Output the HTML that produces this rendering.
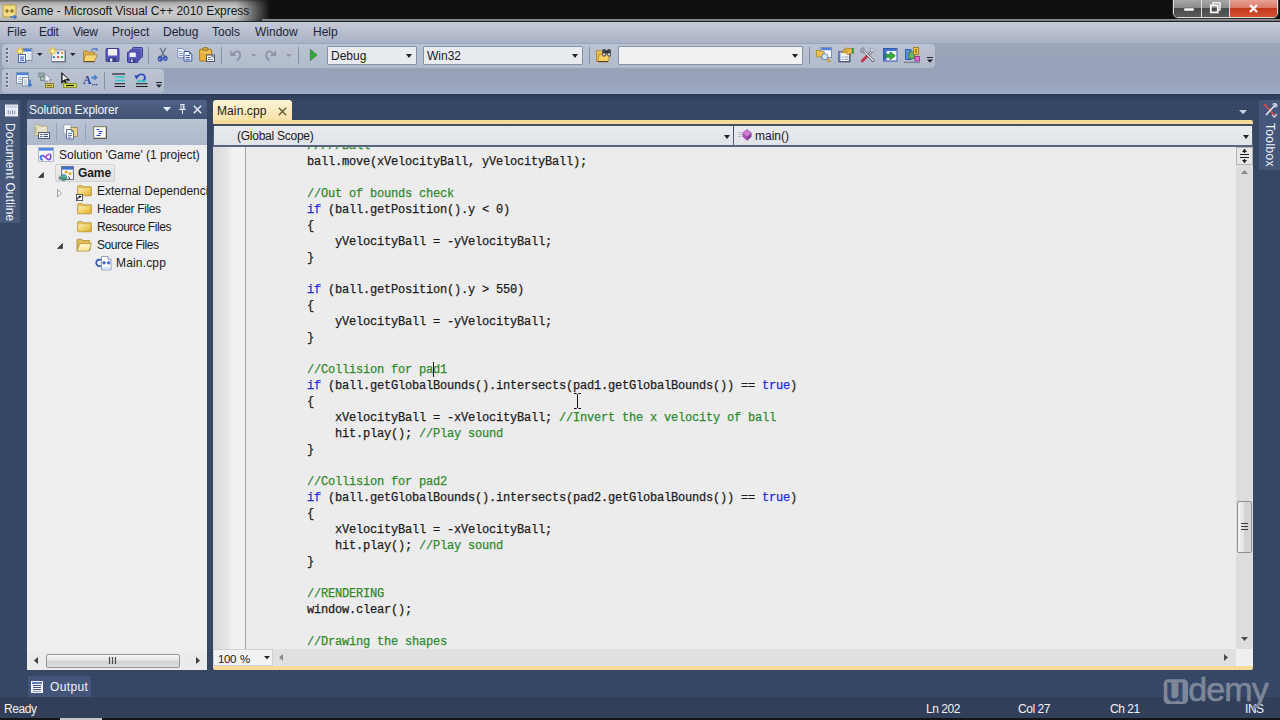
<!DOCTYPE html>
<html>
<head>
<meta charset="utf-8">
<title>Game - Microsoft Visual C++ 2010 Express</title>
<style>
*{box-sizing:border-box;margin:0;padding:0}
html,body{width:1280px;height:720px;overflow:hidden}
body{position:relative;background:#344564;font-family:"Liberation Sans",sans-serif;font-size:12px;color:#1a1a1a}
.abs{position:absolute}
svg{overflow:visible}
/* title bar */
#title{left:0;top:0;width:1280px;height:22px;background:#101010}
#titleglow{left:0;top:0;width:275px;height:21px;background:linear-gradient(90deg,rgba(16,16,16,0) 0,rgba(16,16,16,0) 236px,rgba(16,16,16,.5) 253px,#101010 270px),linear-gradient(#626262 0,#a4a4a4 12%,#c2c2c2 30%,#cbcbcb 60%,#c2c2c2 85%,#adadad 100%)}
#titleclip{left:0;top:0;width:1280px;height:21px;overflow:hidden}
#titletext{left:21px;top:4px;font-size:12px;color:#151515;white-space:nowrap;letter-spacing:-.06px}
#titlehl{left:0;top:19px;width:1280px;height:2px;background:linear-gradient(#9a9a9a,#6c6c6c)}
#titleline{left:0;top:21px;width:1280px;height:1px;background:#20242c}
#wbtn{left:1173px;top:-4px;width:105px;height:22px;border:1px solid #d8d8d8;border-radius:0 0 5px 5px;overflow:hidden;box-shadow:0 0 0 1px #333}
#wbtn div{position:absolute;top:0;height:22px}
.wb{background:linear-gradient(#b2b2b2 0,#8c8c8c 48%,#4a4a4a 52%,#5e5e5e 100%);border-right:1px solid #dcdcdc}
.wbc{background:linear-gradient(#eeb0a4 0,#da7a68 48%,#c23a1c 52%,#d8583a 100%)}
/* menu */
#menu{left:0;top:22px;width:1280px;height:21px;background:linear-gradient(#c5cad6,#a9b2c6)}
#menu span{position:absolute;top:3px;font-size:12px;color:#1c2436}
#menu em{font-style:normal;letter-spacing:-.3px}
/* toolbars */
#tbarea{left:0;top:43px;width:1280px;height:51px;background:linear-gradient(#9aa5ba 0,#97a2b8 65%,#9da9c3 100%)}
.tb{height:24px;background:linear-gradient(#bcc4d3,#b2bbcc);border-radius:4px}
.combo{height:19px;background:#e8ebef;border:1px solid #8591a8;font-size:12px;line-height:17px;padding-left:4px;color:#1b1b1b;border-radius:1px}
.combo:after{content:"";position:absolute;right:4px;top:7px;border:3.5px solid transparent;border-top:4px solid #222;border-bottom:0}
.sep{width:1px;height:17px;background:#8490a6}
/* dotted main bg */
#main{left:0;top:94px;width:1280px;height:604px;background-color:#344564;background-image:radial-gradient(circle at .5px .5px,rgba(120,138,172,.22) .45px,rgba(120,138,172,0) .8px),radial-gradient(circle at 2.5px 2.5px,rgba(120,138,172,.22) .45px,rgba(120,138,172,0) .8px),linear-gradient(rgba(30,44,72,.55) 0,rgba(30,44,72,0) 8px);background-size:4px 4px,4px 4px,100% 100%}
#status{left:0;top:697px;width:1280px;height:21px;background:#323f5b;color:#fff}
#status span{position:absolute;top:5px;color:#f2f2f2;font-size:12px;letter-spacing:-.45px}
#bottomline{left:0;top:718px;width:1280px;height:2px;background:#141414}
/* solution explorer */
#sehead{left:27px;top:100px;width:180px;height:20px;background:linear-gradient(#4f6285,#3f5274);border-radius:3px 3px 0 0}
#sehead span{position:absolute;left:2px;top:3px;font-size:12px;color:#f4f6fa;letter-spacing:-.12px}
#setb{left:27px;top:119px;width:180px;height:26px;background:linear-gradient(#bbc4d4,#adb8cb)}
#setree{left:27px;top:145px;width:180px;height:507px;background:#eeeeee;overflow:hidden}
#setree .it{position:absolute;white-space:nowrap;font-size:12px;color:#1a1a1a;height:18px;line-height:18px}
#sesel{left:28px;top:19px;width:60px;height:18px;border:1px solid #d2d2d2;border-radius:2px;background:linear-gradient(#ececec,#e0e0e0)}
#sescroll{left:27px;top:652px;width:180px;height:18px;background:#ebebeb}
#sethumb{left:19px;top:2px;width:134px;height:14px;border:1px solid #979797;border-radius:2px;background:linear-gradient(#f6f6f6,#e3e3e3 45%,#d2d2d2 55%,#dcdcdc)}
/* side tabs */
#doctab{left:0;top:100px;width:20px;height:123px;background:#47597a;border-radius:0 2px 2px 0}
.vtext{position:absolute;transform-origin:0 0;transform:rotate(90deg);white-space:nowrap;color:#f0f3f8;font-size:12px}
#tooltab{left:1259px;top:100px;width:21px;height:70px;background:#445679}
/* editor */
#tab{left:213px;top:100px;width:79px;height:22px;background:linear-gradient(#fcf4d6,#f6e0a4);border-radius:3px 3px 0 0}
#tab span{position:absolute;left:4px;top:4px;font-size:12px;color:#1a1a1a;letter-spacing:.1px}
#tabline{left:213px;top:120px;width:1040px;height:4px;background:#f6dc98;border-radius:0 2px 0 0}
#nav{left:213px;top:124px;width:1040px;height:23px;background:linear-gradient(#454f62 0,#454f62 2px,#5a6478 21px,#59637a 23px)}
.navc{position:absolute;top:2px;height:19px;background:linear-gradient(#e9ebef,#e0e3e9);font-size:12px;line-height:21px;color:#1a1a1a}
.navc:after{content:"";position:absolute;right:3px;top:9px;border:3.5px solid transparent;border-top:4px solid #222;border-bottom:0}
#ed{left:213px;top:147px;width:1040px;height:502px;background:#ececec;overflow:hidden}
#gut1{left:0;top:0;width:15px;height:502px;background:linear-gradient(90deg,#d9d9d9,#e6e6e6)}
#gut2{left:15px;top:0;width:17px;height:502px;background:linear-gradient(90deg,#e8e8e8,#f1f1f1 4px)}
#gutline{left:32px;top:0;width:1px;height:502px;background:#a5a5a5}
#code{left:94px;top:-9px;font-family:"Liberation Mono",monospace;font-size:12px;letter-spacing:-.2px;line-height:16px;white-space:pre;color:#1c1c1c;-webkit-text-stroke:.25px}
#code i{font-style:normal;color:#2f8a2f}
#code b{font-weight:normal;color:#2a2ad8}
#caret{left:220px;top:215px;width:1px;height:15px;background:#111}
#vs{left:1023px;top:0;width:17px;height:502px;background:#dddddd}
#vthumb{left:1024px;top:354px;width:15px;height:52px;border:1px solid #8e8e8e;border-radius:2px;background:linear-gradient(90deg,#f5f5f5,#e0e0e0 45%,#cfcfcf 55%,#d8d8d8)}
#split{left:1023px;top:0;width:17px;height:18px;background:#e8e8e8;border:1px solid #b4b4b4}
#edbot{left:213px;top:649px;width:1040px;height:17px;background:#e0e0e0}
#zoomc{left:0;top:0;width:60px;height:17px;background:#f2f2f2;border:1px solid #d0d0d0;font-size:11.5px;line-height:18px;padding-left:4px;letter-spacing:-.45px;word-spacing:1.5px}
#corner{left:1023px;top:0;width:17px;height:17px;background:#efefef}
#edline{left:213px;top:666px;width:1040px;height:4px;background:#f6dc98;border-radius:0 0 2px 2px}
#outtab{left:28px;top:676px;width:63px;height:21px;background:#43557a}
#outtab span{position:absolute;left:22px;top:4px;color:#f2f4f8;font-size:12px;letter-spacing:.35px}
#udemy{left:1163px;top:669px;font-size:40px;letter-spacing:-2.5px;color:rgba(200,206,218,.62);white-space:nowrap;line-height:44px}
#ubox{left:1163px;top:678px;width:27px;height:27px;border-radius:5px;background:rgba(200,206,218,.62)}
</style>
</head>
<body>
<!-- TITLE -->
<div id="title" class="abs"></div><div id="titleclip" class="abs"><div id="titleglow" class="abs"></div></div><div id="titlehl" class="abs" style="left:262px;width:1018px"></div><div id="titleline" class="abs"></div><svg class="abs" style="left:2px;top:4px" width="16" height="16" viewBox="0 0 16 16" ><rect x="1" y="1" width="13" height="12" fill="#f2dc86" stroke="#b89a3a"/><path d="M3 7h4M5 5v4M8 7h4M10 5v4" stroke="#7a6420" stroke-width="1.200"/><path d="M8 13h6l-2-2M14 13l-2 2" stroke="#3a78d0" stroke-width="1.400" fill="none"/></svg><div id="titletext" class="abs">Game - Microsoft Visual C++ 2010 Express</div><div id="wbtn" class="abs"><div class="wb" style="left:0;width:28px"></div><div class="wb" style="left:28px;width:28px"></div><div class="wbc" style="left:56px;width:48px"></div></div><svg class="abs" style="left:1184px;top:8px" width="10" height="3" viewBox="0 0 10 3" ><rect x="0" y="0" width="10" height="3" fill="#f6f6f6" stroke="#555" stroke-width=".5"/></svg><svg class="abs" style="left:1210px;top:2px" width="11" height="11" viewBox="0 0 11 11" ><path d="M3 3V.800h7v7H8" fill="none" stroke="#f0f0f0" stroke-width="1.500"/><rect x=".800" y="3.400" width="7" height="7" fill="none" stroke="#f6f6f6" stroke-width="1.800"/></svg><svg class="abs" style="left:1249px;top:4px" width="9" height="9" viewBox="0 0 9 9" ><path d="M1 1l7 7M8 1L1 8" stroke="#f8f8f8" stroke-width="2.400"/></svg>
<!-- MENU -->
<div id="menu" class="abs"><span style="left:7px">File</span><span style="left:39px"><em>Edit</em></span><span style="left:73px"><em>View</em></span><span style="left:112px">Project</span><span style="left:163px">Debug</span><span style="left:212px">Tools</span><span style="left:255px">Window</span><span style="left:313px">Help</span></div>
<!-- TOOLBARS -->
<div id="tbarea" class="abs"></div><div class="abs tb" style="left:2px;top:43.500px;width:933px;height:24.500px"></div><div class="abs tb" style="left:2px;top:69px;width:162px"></div><svg class="abs" style="left:6px;top:48px" width="3" height="15" viewBox="0 0 3 15" ><rect x=".6" y="0.6" width="2" height="2" fill="#e4e9f2"/><rect x="0" y="0" width="2" height="2" fill="#5f6d88"/><rect x=".6" y="4.6" width="2" height="2" fill="#e4e9f2"/><rect x="0" y="4" width="2" height="2" fill="#5f6d88"/><rect x=".6" y="8.6" width="2" height="2" fill="#e4e9f2"/><rect x="0" y="8" width="2" height="2" fill="#5f6d88"/><rect x=".6" y="12.6" width="2" height="2" fill="#e4e9f2"/><rect x="0" y="12" width="2" height="2" fill="#5f6d88"/></svg><svg class="abs" style="left:6px;top:73px" width="3" height="15" viewBox="0 0 3 15" ><rect x=".6" y="0.6" width="2" height="2" fill="#e4e9f2"/><rect x="0" y="0" width="2" height="2" fill="#5f6d88"/><rect x=".6" y="4.6" width="2" height="2" fill="#e4e9f2"/><rect x="0" y="4" width="2" height="2" fill="#5f6d88"/><rect x=".6" y="8.6" width="2" height="2" fill="#e4e9f2"/><rect x="0" y="8" width="2" height="2" fill="#5f6d88"/><rect x=".6" y="12.6" width="2" height="2" fill="#e4e9f2"/><rect x="0" y="12" width="2" height="2" fill="#5f6d88"/></svg><svg class="abs" style="left:16px;top:47px" width="16" height="16" viewBox="0 0 16 16" ><rect x="6.5" y="1.5" width="9.500" height="12" fill="#f4f5f8" stroke="#8392ad"/><rect x="7" y="2" width="8.500" height="2.6" fill="#4a7fd8"/><rect x="11.500" y="6" width="3.500" height="7" fill="#dfe3ea"/><g transform="translate(4 4.2)"><path d="M0-4.2L.9-1.6 3-3 1.6-.9 4.2 0 1.6.9 3 3 .9 1.6 0 4.2-.9 1.6-3 3-1.6.9-4.2 0-1.6-.9-3-3-.9-1.6Z" fill="#fbe070" stroke="#e6b418" stroke-width=".5"/><circle r="1.200" fill="#fff6c8"/></g><rect x="2.5" y="7.5" width="7" height="8" fill="#eef2fc" stroke="#4767a8"/><path d="M4 10h4M4 11.800h4M4 13.600h4" stroke="#3a64c8" stroke-width="1"/></svg><svg class="abs" style="left:37px;top:53px" width="6" height="3" viewBox="0 0 6 3" ><path d="M0 0H5.600L2.800 3Z" fill="#1e2430"/></svg><svg class="abs" style="left:49px;top:47px" width="16" height="16" viewBox="0 0 16 16" ><rect x="2.500" y="3" width="13.500" height="11.500" fill="#f1f2f4" stroke="#8d9ab2"/><path d="M3 14.900h13.400V3.500" fill="none" stroke="#4a5468" stroke-width=".8"/><circle cx="9" cy="5.800" r="1.200" fill="#3d68c8"/><circle cx="12.900" cy="5.800" r="1.200" fill="#f09a28"/><circle cx="4.800" cy="10.100" r="1.200" fill="#2d78d8"/><circle cx="9" cy="10.100" r="1.200" fill="#e0402c"/><circle cx="12.900" cy="10.100" r="1.200" fill="#2f9f3c"/><g transform="translate(3.6 4)"><path d="M0-4.2L.9-1.6 3-3 1.6-.9 4.2 0 1.6.9 3 3 .9 1.6 0 4.2-.9 1.6-3 3-1.6.9-4.2 0-1.6-.9-3-3-.9-1.6Z" fill="#fbe070" stroke="#e6b418" stroke-width=".5"/><circle r="1.200" fill="#fff6c8"/></g></svg><svg class="abs" style="left:70px;top:53px" width="6" height="3" viewBox="0 0 6 3" ><path d="M0 0H5.600L2.800 3Z" fill="#1e2430"/></svg><svg class="abs" style="left:82px;top:47px" width="16" height="16" viewBox="0 0 16 16" ><path d="M1.500 4h4l1 1.200h6v9.300h-11z" fill="#e2b04a" stroke="#a87c22" stroke-width=".8"/><path d="M3.600 7.800h11.600l-2.600 6.700h-11z" fill="#f8d675" stroke="#a8822a" stroke-width=".8"/><path d="M1.800 14.700h10.600" stroke="#4e3c10" stroke-width="1"/><path d="M9.400 3.800c1.200-2.200 3.600-2.600 5-1.200" fill="none" stroke="#5f86cc" stroke-width="1.500"/><path d="M13 .9l3 .5-1 3.200z" fill="#4f76bc"/></svg><svg class="abs" style="left:105px;top:47px" width="16" height="16" viewBox="0 0 16 16" ><rect x="1" y="1.5" width="13" height="13" rx="1" fill="#5b5cc0" stroke="#3b3c96"/><rect x="3" y="2" width="9" height="6.5" fill="#f3eef6"/><rect x="3.5" y="10.5" width="8" height="4.5" fill="#3d3f86"/><rect x="5" y="11.5" width="2.3" height="3" fill="#e8e8f4"/></svg><svg class="abs" style="left:127px;top:47px" width="16" height="16" viewBox="0 0 16 16" ><rect x="5.5" y=".5" width="10" height="10" rx=".8" fill="#6d6fcb" stroke="#3e3f96"/><rect x="3" y="2.8" width="10" height="10" rx=".8" fill="#6567c6" stroke="#3e3f96"/><rect x=".5" y="5" width="10.5" height="10.5" rx=".8" fill="#5b5cc0" stroke="#3b3c96"/><rect x="2.6" y="5.6" width="6.2" height="4.4" fill="#efeaf6"/><rect x="3" y="12" width="5.6" height="3.2" fill="#3d3f86"/><rect x="4" y="12.6" width="1.6" height="2.4" fill="#e4e4f2"/></svg><div class="abs sep" style="left:148px;top:47px"></div><svg class="abs" style="left:157px;top:47px" width="12" height="16" viewBox="0 0 12 16" ><path d="M3.100 .9L7.600 9.600M8.700 .9L4.200 9.600" stroke="#727c90" stroke-width="1.600" fill="none"/><ellipse cx="3.200" cy="11.700" rx="2.200" ry="2.700" fill="#3a58b8" stroke="#2c469c" stroke-width=".6"/><ellipse cx="8.400" cy="11.300" rx="2" ry="2.400" fill="#3a58b8" stroke="#2c469c" stroke-width=".6"/><circle cx="2.800" cy="12.200" r=".7" fill="#a8bcf0"/><circle cx="8.800" cy="11.600" r=".7" fill="#a8bcf0"/></svg><svg class="abs" style="left:177px;top:47px" width="16" height="16" viewBox="0 0 16 16" ><path d="M.8 1.500h4.600l2 2v7.200H.8z" fill="#f4f6fc" stroke="#7088c0" stroke-width=".9"/><path d="M2 4.500h3M2 6.500h4M2 8.500h4" stroke="#8a9cc8"/><path d="M7 4.500h5l2.800 2.800v6.700H7z" fill="#f6f8fe" stroke="#3f5aa0" stroke-width="1"/><path d="M8.500 8.500h4.500M8.500 10.500h4.500M8.500 12.300h4.500" stroke="#4a66b0"/><path d="M12 4.500v2.800h2.800z" fill="#3f5aa0"/></svg><svg class="abs" style="left:199px;top:47px" width="16" height="16" viewBox="0 0 16 16" ><rect x=".6" y="2.200" width="12" height="11.800" rx="1" fill="#e6b23c" stroke="#a67c1e"/><path d="M1.600 3.200h10v3h-10z" fill="#f0c85a" opacity=".7"/><rect x="4" y=".6" width="5" height="3" rx="1.200" fill="#d4a840" stroke="#86681c" stroke-width=".8"/><rect x="7.500" y="8" width="8" height="6.500" fill="#f7f8fb" stroke="#4c5262"/><path d="M9 10.500h3M9 12.500h5" stroke="#7c8498"/><path d="M13 8v2h2.500" fill="none" stroke="#4c5262" stroke-width=".8"/></svg><div class="abs sep" style="left:221px;top:47px"></div><svg class="abs" style="left:230px;top:48px" width="13" height="15" viewBox="0 0 13 15" ><path d="M3.600 6.400C5 2.600 9.600 2.200 10.200 6.600c.3 2.400-1.200 4.400-3.200 6.200" fill="none" stroke="#8d95aa" stroke-width="1.900"/><path d="M.2 2.300V8H6.200z" fill="#8d95aa"/></svg><svg class="abs" style="left:251px;top:54px" width="6" height="3" viewBox="0 0 6 3" ><path d="M0 0H5.600L2.800 3Z" fill="#8d96aa"/></svg><svg class="abs" style="left:264px;top:48px" width="13" height="15" viewBox="0 0 13 15" ><g transform="translate(12.400 0) scale(-1 1)"><path d="M3.600 6.400C5 2.600 9.600 2.200 10.200 6.600c.3 2.400-1.200 4.400-3.200 6.200" fill="none" stroke="#8d95aa" stroke-width="1.900"/><path d="M.2 2.300V8H6.200z" fill="#8d95aa"/></g></svg><svg class="abs" style="left:286px;top:54px" width="6" height="3" viewBox="0 0 6 3" ><path d="M0 0H5.600L2.800 3Z" fill="#8d96aa"/></svg><div class="abs sep" style="left:298px;top:47px"></div><svg class="abs" style="left:310px;top:49px" width="8" height="12" viewBox="0 0 8 12" ><path d="M.3 .2L7 6 .3 11.8z" fill="#35a83a" stroke="#1f7d26" stroke-width=".6"/></svg><div class="abs combo" style="left:327px;top:46px;width:90px;padding-left:3px;line-height:18px">Debug</div><div class="abs combo" style="left:423px;top:46px;width:160px;padding-left:3px;line-height:18px">Win32</div><div class="abs sep" style="left:589px;top:47px"></div><svg class="abs" style="left:596px;top:47px" width="16" height="16" viewBox="0 0 16 16" ><path d="M.5 3.500h4.500l1 1.300h3v9.700h-8.500z" fill="#ecc257" stroke="#a5822e" stroke-width=".8"/><path d="M3 7.300h11.300l-2 7.200h-10.800z" fill="#f6cf62" stroke="#a98226" stroke-width=".8"/><path d="M2 14.600h10" stroke="#5a4410" stroke-width="1.200"/><rect x="6.300" y="2" width="3.600" height="7.600" rx="1.600" fill="#3c4149"/><rect x="11.300" y="2" width="3.600" height="7.600" rx="1.600" fill="#3c4149"/><rect x="9.300" y="3.400" width="2.600" height="3" fill="#2a2e35"/><circle cx="8.100" cy="7.400" r="1.100" fill="#dfe6ee"/><circle cx="13.100" cy="7.400" r="1.100" fill="#dfe6ee"/></svg><div class="abs combo" style="left:618px;top:46px;width:185px;background:#f0f1f3"></div><div class="abs sep" style="left:809px;top:47px"></div><svg class="abs" style="left:816px;top:47px" width="16" height="16" viewBox="0 0 16 16" ><rect x="4.800" y=".5" width="10.700" height="10" fill="#f2f4f8" stroke="#7d8eb0"/><rect x="5.300" y="1" width="9.700" height="2.200" fill="#4d82dc"/><path d="M.4 3.400h3.600l.9 1h3.300v5.400H.4z" fill="#e8c04e" stroke="#a8852a" stroke-width=".8"/><circle cx="8.800" cy="9.800" r="3" fill="#d6e8f6" stroke="#7c93b4" stroke-width="1.100"/><path d="M11 12l3.200 3.200" stroke="#c69a3a" stroke-width="2"/></svg><svg class="abs" style="left:838px;top:47px" width="16" height="16" viewBox="0 0 16 16" ><rect x=".6" y="4.500" width="11" height="10" fill="#f7f8fa" stroke="#5b6b8c"/><path d="M1.100 14.900h11V5" fill="none" stroke="#3c4660" stroke-width=".8"/><rect x="1" y="5" width="1.400" height="9" fill="#5485d6"/><path d="M3.500 10h2M6.500 10h4M3.500 12.300h2M6.500 12.300h4" stroke="#8c95a8"/><path d="M3.200 5.600l4.300-4.400 6.500.4v4.600l-4.600 1.400-2-1.800z" fill="#efc04a" stroke="#a07c20" stroke-width=".8"/><path d="M5 5l3-3M6.500 5.500l3-3M8 6l3-3" stroke="#8a6c1c" stroke-width=".5"/><rect x="14" y="1" width="1.900" height="5.600" fill="#3a9a48"/></svg><svg class="abs" style="left:860px;top:47px" width="16" height="16" viewBox="0 0 16 16" ><path d="M7.600 8.600L12.400 3.600" stroke="#4a4f5a" stroke-width="2.400"/><path d="M7.600 8.600L12.400 3.600" stroke="#e8ebf0" stroke-width="1.300"/><path d="M2.200 14L7.800 8.400" stroke="#c43246" stroke-width="2.700" stroke-linecap="round"/><path d="M10 1.600l2.600-.6 3 3.400-1.500 1.100-1.500-1.600-1.700.7z" fill="#d9dde6" stroke="#7d8598" stroke-width=".6"/><path d="M4 4L13.200 13.800" stroke="#3f444e" stroke-width="2.500" stroke-linecap="round"/><path d="M4 4L13.200 13.800" stroke="#eef1f5" stroke-width="1.300" stroke-linecap="round"/><path d="M4.600 1.600A2.300 2.300 0 1 0 4.800 5" fill="none" stroke="#8a92a4" stroke-width="1.500"/></svg><svg class="abs" style="left:882px;top:47px" width="16" height="16" viewBox="0 0 16 16" ><rect x="1.500" y="1.500" width="13.500" height="12.500" fill="#f1f3f7" stroke="#3457a8" stroke-width="1"/><rect x="2" y="2" width="12.500" height="2" fill="#3f77d0"/><rect x="2" y="4" width="2.600" height="9.500" fill="#3f6fc8"/><path d="M3.400 7.400h4.800V4.900l5 3.900-5 3.900V10.200H3.400z" fill="#34b336" stroke="#14701c" stroke-width=".8"/></svg><svg class="abs" style="left:904px;top:47px" width="16" height="16" viewBox="0 0 16 16" ><rect x="1.5" y="2.5" width="5.5" height="10" fill="#5b8fd8" stroke="#2c5fb0"/><rect x="5" y="5" width="5.5" height="6.5" fill="#6fb36a" stroke="#3d7f3d"/><rect x="9.5" y=".5" width="5" height="7" fill="#f2cc4a" stroke="#9c7d1e"/><path d="M12 2v4" stroke="#6b5510" stroke-width="1.2"/><rect x="11" y="9.5" width="4.500" height="4.500" fill="#e86ad8" stroke="#a23a98"/><path d="M0 15.4h16" stroke="#7b8496" stroke-width="1.4"/></svg><svg class="abs" style="left:927px;top:57px" width="6" height="7" viewBox="0 0 6 7" ><path d="M0 .5h6" stroke="#1e2430" stroke-width="1"/><path d="M0 2.500H6L3 5.800Z" fill="#1e2430"/></svg><svg class="abs" style="left:16px;top:72px" width="16" height="16" viewBox="0 0 16 16" ><rect x=".5" y=".5" width="12" height="11" fill="#f3f5f9" stroke="#8292b2"/><rect x="1" y="1" width="11" height="2.2" fill="#4f84dc"/><path d="M2.500 5.500h3M2.500 7.500h3M2.500 9.500h3" stroke="#9aa4b8"/><rect x="6.5" y="5.5" width="6" height="8.5" fill="#fafbfd" stroke="#7888a6"/><path d="M8 8h3.200M8 10h3.200M8 12h3.200" stroke="#a9b2c4"/><path d="M14 7.500v6" stroke="#3f7cd4" stroke-width="1.6"/><path d="M11.400 12l2.600 3.600 2.600-3.600z" fill="#3f7cd4"/></svg><svg class="abs" style="left:38px;top:72px" width="16" height="16" viewBox="0 0 16 16" ><rect x=".8" y="1" width="5" height="4" fill="#9fb0a8" stroke="#6e7f86" stroke-width=".8"/><rect x="2.400" y="4.400" width="5" height="4" fill="#aab9b4" stroke="#6e7f86" stroke-width=".8"/><path d="M7 1.500v9l2.200-2 1.600 3.400 1.600-.8-1.600-3.200h3z" fill="#f4f5f8" stroke="#7e889c" stroke-width=".8"/><rect x="7.500" y="11.500" width="8" height="4" fill="#d8c858" stroke="#8c8030"/><path d="M9 13.500h5" stroke="#6e6420" stroke-width="1"/></svg><svg class="abs" style="left:61px;top:72px" width="16" height="16" viewBox="0 0 16 16" ><path d="M.6 .4v11l2.600-2.400 2 4.200 2-.900-2-4h3.600z" fill="#111" stroke="#000" stroke-width=".5"/><path d="M1.600 2.600v6.400l1.900-1.700.6 0 1.900 3.900.5-.25-2-4.100h2.400z" fill="#fff"/><rect x="2.500" y="11.500" width="13" height="4" fill="#d4dc58" stroke="#8c9428"/><path d="M5 13.500h8" stroke="#1c1c10" stroke-width="1.200"/></svg><svg class="abs" style="left:83px;top:72px" width="16" height="16" viewBox="0 0 16 16" ><text x="0" y="12" font-family="Liberation Serif,serif" font-weight="bold" font-size="11.500" fill="#2a3f9c">A</text><path d="M8.400 5.600h3.600" stroke="#3f7cd4" stroke-width="1.800"/><path d="M11.200 2.600l3.600 3-3.600 3z" fill="#3f7cd4"/><path d="M9 12.600h1.200M11 12.600h1.200M13 12.600h1.200" stroke="#2a3f9c" stroke-width="1.200"/></svg><div class="abs sep" style="left:104px;top:72px"></div><svg class="abs" style="left:111px;top:72px" width="16" height="16" viewBox="0 0 16 16" ><path d="M1 2h13" stroke="#16181c" stroke-width="1.100"/><path d="M4 5h10M4 8.500h10" stroke="#35c6cc" stroke-width="1.700"/><path d="M3.500 11.800h10.500M3.500 14.500h10.500" stroke="#16181c" stroke-width="1.100"/></svg><svg class="abs" style="left:133px;top:72px" width="16" height="16" viewBox="0 0 16 16" ><path d="M4.500 4.800c1.400-3.400 6.400-3.400 7.400.2.400 1.600-.6 3.200-2.300 3.900" fill="none" stroke="#2c49b8" stroke-width="1.700"/><path d="M1.200 3.200l5 .2-2.600 4.200z" fill="#2c49b8"/><path d="M4 9.200h9" stroke="#35c6cc" stroke-width="1.700"/><path d="M3 11.800h11.500M3 14.500h11.500" stroke="#16181c" stroke-width="1.100"/></svg><svg class="abs" style="left:156px;top:82px" width="6" height="7" viewBox="0 0 6 7" ><path d="M0 .5h6" stroke="#1e2430" stroke-width="1"/><path d="M0 2.500H6L3 5.800Z" fill="#1e2430"/></svg>
<!-- MAIN -->
<div id="main" class="abs"></div>
<div id="doctab" class="abs"><svg class="abs" style="left:5px;top:4px" width="13" height="13" viewBox="0 0 12 11" ><rect x=".5" y=".5" width="11" height="10" fill="#e8ecf4" stroke="#f4f6fa" stroke-width="1"/><rect x="1" y="1" width="10" height="2" fill="#c6d0e4"/><path d="M3 5v4M5 6v3M7 5v4M9 6v3" stroke="#8797b8" stroke-width="1"/></svg><div class="vtext" style="left:17px;top:23px;letter-spacing:.15px">Document Outline</div></div><div id="tooltab" class="abs"><svg class="abs" style="left:4px;top:3px" width="14" height="15" viewBox="0 0 14 15" ><path d="M1 1l11 12" stroke="#e04848" stroke-width="1.600"/><path d="M13 1L3 12" stroke="#e6eaf2" stroke-width="1.600"/><path d="M9.500 1.500c1.500-1.500 4-1 4.500 1l-2 2" fill="none" stroke="#c8cfdc" stroke-width="1.300"/><path d="M9 12l2.500 2 2.500-3" fill="none" stroke="#c8cfdc" stroke-width="1.400"/></svg><div class="vtext" style="left:18px;top:22.500px;letter-spacing:.35px">Toolbox</div></div><div id="outtab" class="abs"><svg class="abs" style="left:3px;top:5px" width="12" height="12" viewBox="0 0 12 12" ><g shape-rendering="crispEdges"><rect x="0" y="0" width="12" height="12" fill="#f4f6fa"/><rect x="1" y="1" width="10" height="2" fill="#5f7cc0"/><rect x="2" y="4" width="8" height="1" fill="#42527a"/><rect x="2" y="6" width="8" height="1" fill="#42527a"/><rect x="2" y="8" width="8" height="1" fill="#42527a"/><rect x="2" y="10" width="8" height="1" fill="#8c98b4"/></g></svg><span>Output</span></div>
<!-- SOLUTION EXPLORER -->
<div id="sehead" class="abs"><span>Solution Explorer</span><svg class="abs" style="left:136px;top:7px" width="8" height="5" viewBox="0 0 8 5" ><path d="M0 0H8L4 4.500Z" fill="#e8ecf4"/></svg><svg class="abs" style="left:152px;top:4px" width="7" height="10" viewBox="0 0 7 10" ><path d="M1.500 .5h4M2 .5v5M5 .5v5M4.200 .5v5M.2 5.500h6.600M3.500 5.500v4.300" stroke="#e8ecf4" stroke-width="1" fill="none"/></svg><svg class="abs" style="left:166px;top:5px" width="9" height="9" viewBox="0 0 9 9" ><path d="M.8 .8l7.400 7.400M8.200 .8L.8 8.200" stroke="#e8ecf4" stroke-width="1.500"/></svg></div><div id="setb" class="abs"><svg class="abs" style="left:7px;top:5px" width="16" height="16" viewBox="0 0 16 16" ><path d="M.5 1.500c0-.6.400-1 1-1h4l1 1.500h6c.6 0 1 .4 1 1v8.500H.5z" fill="#dcd8b6" stroke="#a9a484" stroke-width=".8"/><path d="M3.500 4h9M3.500 6h9M3.500 8h9" stroke="#f1eed8" stroke-width="1"/><path d="M1.600 4h1M1.600 6h1M1.600 8h1" stroke="#7f7a54" stroke-width="1"/><rect x="4.500" y="8.500" width="11" height="6" fill="#f4f6fa" stroke="#4e5a74"/><path d="M6.200 10.500h2M9.500 10.500h4.500M6.200 12.500h2M9.500 12.500h4.500" stroke="#3c4a70"/></svg><div class="abs sep" style="left:29px;top:4px;background:#97a2b8"></div><svg class="abs" style="left:36px;top:5px" width="16" height="16" viewBox="0 0 16 16" ><path d="M.8 .8h7v9h-7z" fill="#f6f7f9" stroke="#7a8498" stroke-width=".9" stroke-dasharray="1.200 1"/><path d="M8 3.500h6.500v9H10" fill="#e8d292" stroke="#a08c4a" stroke-width=".9"/><path d="M3.500 5.500h5l2 2v7.500h-7z" fill="#f8f9fc" stroke="#5f6f94"/><path d="M5 9.500h4M5 11.500h4M5 13.300h3" stroke="#5a78c4"/><path d="M8.500 5.500v2h2" fill="#3a66c8" stroke="#3a66c8" stroke-width=".6"/></svg><div class="abs sep" style="left:58px;top:4px;background:#97a2b8"></div><svg class="abs" style="left:66px;top:7px" width="14" height="13" viewBox="0 0 14 13" ><rect x=".6" y=".6" width="12.800" height="11.800" fill="#fbfbf6" stroke="#8a8c6c" stroke-width="1.200"/><path d="M1 12.400h12.400V1" fill="none" stroke="#55563c" stroke-width="1"/><path d="M3.500 3.500h3M5.500 5.500h4M5.500 7.500h3M3.500 9.500h4" stroke="#2d43b8" stroke-width="1.100"/></svg></div><div id="setree" class="abs"><div id="sesel" class="abs"></div><svg class="abs" style="left:11px;top:2px" width="16" height="15" viewBox="0 0 16 15" ><rect x=".6" y=".6" width="14.800" height="13.800" fill="#f6f7fa" stroke="#a4adc0" stroke-width=".9"/><rect x="1" y="1" width="14" height="2.600" fill="#4f84dc"/><path d="M4.600 12.600c-2.800 0-2.800-4 0-4 2.400 0 3.600 4 6.200 4 2.600 0 2.600-5.200.4-5.600" fill="none" stroke="#7a4bd0" stroke-width="1.600"/><path d="M4.600 12.600c-2.800 0-2.800-4 0-4" fill="none" stroke="#3f8ae0" stroke-width="1.600"/><path d="M7.600 10c1-1.400 2-2.600 3.600-3" fill="none" stroke="#c04fc0" stroke-width="1.500"/></svg><div class="it" style="left:32px;top:1px;letter-spacing:-.02px">Solution 'Game' (1 project)</div><svg class="abs" style="left:11px;top:27px" width="6" height="6" viewBox="0 0 6 6" ><path d="M5.500 .5v5H.5z" fill="#3a3a3a" stroke="#262626" stroke-width=".6"/></svg><svg class="abs" style="left:32px;top:21px" width="15" height="15" viewBox="0 0 15 15" ><rect x="2.600" y=".6" width="11.800" height="12.800" fill="#f4f5f8" stroke="#56627e" stroke-width=".9"/><rect x="3" y="1" width="11" height="2.600" fill="#3f6fd0"/><path d="M7.200 4.600v3.200M5.600 6.200h3.200M11 6v3.200M9.400 7.600h3.200" stroke="#e2a412" stroke-width="1.300"/><circle cx="4.600" cy="11.600" r="3" fill="#3f9c6c" stroke="#2a6a8c" stroke-width=".7"/><path d="M2.400 10.600c1.400-.8 3-.8 4.400 0" stroke="#8fd0e8" stroke-width=".8" fill="none"/><path d="M9 10.500l2 1.600-2 1.600M1 10.500l-1 1.600 1 1.600" fill="none" stroke="#333a48" stroke-width=".9"/></svg><div class="it" style="left:51px;top:19px;font-weight:bold;letter-spacing:-.1px">Game</div><svg class="abs" style="left:30px;top:44px" width="5" height="9" viewBox="0 0 5 9" ><path d="M.6 .6l4 3.600-4 3.600z" fill="#fcfcfc" stroke="#9a9a9a" stroke-width="1"/></svg><svg class="abs" style="left:50px;top:40px" width="15" height="11.5" viewBox="0 0 16 14" preserveAspectRatio="none"><defs><linearGradient id="fg" x1="0" y1="0" x2="1" y2="1"><stop offset="0" stop-color="#fdf0b8"/><stop offset=".55" stop-color="#f0cf62"/><stop offset="1" stop-color="#d9a935"/></linearGradient></defs><path d="M.6 1.500c0-.5.400-.9.900-.9h4.200l1 1.400h8c.4 0 .7.300.7.700v9.800c0 .4-.3.700-.7.700H1.300c-.4 0-.7-.3-.7-.7z" fill="#e8c65a" stroke="#b3923a" stroke-width=".8"/><rect x="1" y="3.400" width="14" height="9.400" rx=".5" fill="url(#fg)" stroke="#c09a3a" stroke-width=".6"/></svg><svg class="abs" style="left:49px;top:49px" width="7" height="7" viewBox="0 0 7 7" ><rect x=".4" y=".4" width="6.200" height="6.200" fill="#fdfdfd" stroke="#3a3e48" stroke-width=".8"/><path d="M1.600 5.600c0-2 1-3 2.800-3" fill="none" stroke="#20242c" stroke-width="1.100"/><path d="M3.400 1.200l2.400 1.400-2.400 1.600z" fill="#20242c"/></svg><div class="it" style="left:70px;top:37px">External Dependencies</div><svg class="abs" style="left:50px;top:58px" width="15" height="11.5" viewBox="0 0 16 14" preserveAspectRatio="none"><defs><linearGradient id="fg2" x1="0" y1="0" x2="1" y2="1"><stop offset="0" stop-color="#fdf0b8"/><stop offset=".55" stop-color="#f0cf62"/><stop offset="1" stop-color="#d9a935"/></linearGradient></defs><path d="M.6 1.500c0-.5.400-.9.900-.9h4.200l1 1.400h8c.4 0 .7.300.7.700v9.800c0 .4-.3.700-.7.700H1.300c-.4 0-.7-.3-.7-.7z" fill="#e8c65a" stroke="#b3923a" stroke-width=".8"/><rect x="1" y="3.400" width="14" height="9.400" rx=".5" fill="url(#fg2)" stroke="#c09a3a" stroke-width=".6"/></svg><div class="it" style="left:70px;top:55px;letter-spacing:-.36px">Header Files</div><svg class="abs" style="left:50px;top:76px" width="15" height="11.5" viewBox="0 0 16 14" preserveAspectRatio="none"><defs><linearGradient id="fg3" x1="0" y1="0" x2="1" y2="1"><stop offset="0" stop-color="#fdf0b8"/><stop offset=".55" stop-color="#f0cf62"/><stop offset="1" stop-color="#d9a935"/></linearGradient></defs><path d="M.6 1.500c0-.5.400-.9.900-.9h4.200l1 1.400h8c.4 0 .7.300.7.700v9.800c0 .4-.3.700-.7.700H1.300c-.4 0-.7-.3-.7-.7z" fill="#e8c65a" stroke="#b3923a" stroke-width=".8"/><rect x="1" y="3.400" width="14" height="9.400" rx=".5" fill="url(#fg3)" stroke="#c09a3a" stroke-width=".6"/></svg><div class="it" style="left:70px;top:73px;letter-spacing:-.43px">Resource Files</div><svg class="abs" style="left:30px;top:98px" width="6" height="6" viewBox="0 0 6 6" ><path d="M5.500 .5v5H.5z" fill="#3a3a3a" stroke="#262626" stroke-width=".6"/></svg><svg class="abs" style="left:49px;top:93px" width="16" height="14" viewBox="0 0 16 14" ><path d="M1 2c0-.4.300-.7.700-.7h4l1 1.300h6.600c.4 0 .7.300.7.700v9.300H1z" fill="#e2bd52" stroke="#a88832" stroke-width=".8"/><path d="M3.800 5.600h11.800l-2.800 7.400H.9z" fill="#fbe9a4" stroke="#b4943c" stroke-width=".8"/><path d="M4.600 6.600h9.600l-1 2.600H3.600z" fill="#fff6d0" opacity=".8"/></svg><div class="it" style="left:70px;top:91px;letter-spacing:-.42px">Source Files</div><svg class="abs" style="left:69px;top:110px" width="16" height="16" viewBox="0 0 16 16" ><path d="M5.500 1.500h6.500l3 3v10.500h-9.500z" fill="#fbfcfe" stroke="#8698bc" stroke-width=".9"/><path d="M12 1.500v3h3" fill="#dfe6f4" stroke="#8698bc" stroke-width=".8"/><path d="M6 12h8v2.600H6z" fill="#d4e0f4"/><path d="M5.200 4.800c-3.600-1-5 1.200-5 3s1.400 4 5 3" fill="none" stroke="#2f55b8" stroke-width="1.700"/><path d="M6.200 7.800h3.600M8 6v3.600M10.800 7.800h3.600M12.600 6v3.600" stroke="#2f55b8" stroke-width="1.300"/></svg><div class="it" style="left:89px;top:109px;letter-spacing:.17px">Main.cpp</div></div><div id="sescroll" class="abs"><svg class="abs" style="left:7px;top:5px" width="4" height="7" viewBox="0 0 4 7" ><path d="M4 0v7L0 3.500z" fill="#3c3c3c"/></svg><svg class="abs" style="left:169px;top:5px" width="4" height="7" viewBox="0 0 4 7" ><path d="M0 0v7L4 3.500z" fill="#3c3c3c"/></svg><div id="sethumb" class="abs"></div><svg class="abs" style="left:82px;top:5px" width="7" height="7" viewBox="0 0 7 7" ><path d="M.5 0v7M3.500 0v7M6.500 0v7" stroke="#4a4a4a" stroke-width="1.200"/></svg></div>
<!-- EDITOR -->
<div id="tab" class="abs"><span>Main.cpp</span><svg class="abs" style="left:65px;top:7px" width="9" height="9" viewBox="0 0 9 9" ><path d="M.8 .8l7.400 7.400M8.200 .8L.8 8.200" stroke="#6d5f3d" stroke-width="1.500"/></svg></div><div id="tabline" class="abs"></div><svg class="abs" style="left:1239px;top:110px" width="8" height="5" viewBox="0 0 8 5" ><path d="M0 0H8L4 4.200Z" fill="#c9d2e2"/></svg><div id="nav" class="abs"><div class="navc" style="left:1px;width:519px;padding-left:23px;letter-spacing:-.25px">(Global Scope)</div><div class="navc" style="left:521px;width:518px;padding-left:21px">main()<svg class="abs" style="left:4px;top:3px" width="14" height="13" viewBox="0 0 14 13" ><path d="M0 3.500h3.500M.8 5.500h3M0 7.500h3.500" stroke="#a9adb6" stroke-width=".8"/><path d="M9 .5l4.500 3.600-4.500 4-4.500-4z" fill="#d27ad8" stroke="#9040a0" stroke-width=".6"/><path d="M4.500 4.100l4.500 4v3.600l-4.500-4z" fill="#a84cb4"/><path d="M13.500 4.100l-4.500 4v3.600l4.500-4z" fill="#8a3896"/></svg></div></div><div id="ed" class="abs"><div id="gut1" class="abs"></div><div id="gut2" class="abs"></div><div id="gutline" class="abs"></div><div id="code" class="abs"><i>/////Ball</i>
ball.move(xVelocityBall, yVelocityBall);

<i>//Out of bounds check</i>
<b>if</b> (ball.getPosition().y &lt; 0)
{
    yVelocityBall = -yVelocityBall;
}

<b>if</b> (ball.getPosition().y &gt; 550)
{
    yVelocityBall = -yVelocityBall;
}

<i>//Collision for pad1</i>
<b>if</b> (ball.getGlobalBounds().intersects(pad1.getGlobalBounds()) == <b>true</b>)
{
    xVelocityBall = -xVelocityBall; <i>//Invert the x velocity of ball</i>
    hit.play(); <i>//Play sound</i>
}

<i>//Collision for pad2</i>
<b>if</b> (ball.getGlobalBounds().intersects(pad2.getGlobalBounds()) == <b>true</b>)
{
    xVelocityBall = -xVelocityBall;
    hit.play(); <i>//Play sound</i>
}

<i>//RENDERING</i>
window.clear();

<i>//Drawing the shapes</i></div><div id="caret" class="abs"></div><svg class="abs" style="left:361px;top:246px" width="7" height="16" viewBox="0 0 7 16" ><path d="M0 .5h2.700M4.300 .5H7M0 15.500h2.700M4.300 15.500H7M3.500 1v14" stroke="#111" stroke-width="1" fill="none"/></svg><div id="vs" class="abs"></div><div id="split" class="abs"></div><svg class="abs" style="left:1027px;top:2px" width="9" height="14" viewBox="0 0 9 14" ><path d="M0 5.500h9M0 8.500h9M4.500 0v4M4.500 10v4" stroke="#1c1c1c" stroke-width="1.200"/><path d="M2 3l2.500-3L7 3zM2 11l2.500 3L7 11z" fill="#1c1c1c"/></svg><svg class="abs" style="left:1028px;top:23px" width="7" height="4" viewBox="0 0 7 4" ><path d="M0 4L3.500 0 7 4z" fill="#8a8a8a"/></svg><svg class="abs" style="left:1028px;top:490px" width="7" height="4" viewBox="0 0 7 4" ><path d="M0 0L3.500 4 7 0z" fill="#4a4a4a"/></svg><div id="vthumb" class="abs"></div><svg class="abs" style="left:1028px;top:376px" width="7" height="7" viewBox="0 0 7 7" ><path d="M0 .5h7M0 3.500h7M0 6.500h7" stroke="#3c3c3c" stroke-width="1.200"/></svg></div><div id="edbot" class="abs"><div id="zoomc" class="abs">100 %</div><svg class="abs" style="left:51px;top:7px" width="6" height="4" viewBox="0 0 6 4" ><path d="M0 0H6L3 3.200Z" fill="#222"/></svg><svg class="abs" style="left:66px;top:5px" width="4" height="7" viewBox="0 0 4 7" ><path d="M4 0v7L0 3.500z" fill="#8a8a8a"/></svg><svg class="abs" style="left:1011px;top:5px" width="4" height="7" viewBox="0 0 4 7" ><path d="M0 0v7L4 3.500z" fill="#4a4a4a"/></svg><div id="corner" class="abs"></div></div><div id="edline" class="abs"></div>
<!-- STATUS -->
<div id="status" class="abs"><span style="left:4px">Ready</span><span style="left:926px">Ln 202</span><span style="left:1018px">Col 27</span><span style="left:1110px">Ch 21</span><span style="left:1245px">INS</span></div><div id="bottomline" class="abs"></div><div class="abs" style="left:60px;top:718px;width:42px;height:2px;background:#c8c8c8"></div><svg class="abs" style="left:1160px;top:672px" width="115" height="40" viewBox="0 0 115 40"><rect x="3.700" y="7.200" width="24.300" height="24.800" rx="4.500" fill="#7d8799"/><text x="5.800" y="29.300" font-family="Liberation Sans,sans-serif" font-size="33" fill="#37486a" stroke="#37486a" stroke-width="1">u</text><text x="28.300" y="29" font-family="Liberation Sans,sans-serif" font-size="34" letter-spacing="-.9" fill="#7d8799" stroke="#7d8799" stroke-width=".6">demy</text></svg>
</body>
</html>
